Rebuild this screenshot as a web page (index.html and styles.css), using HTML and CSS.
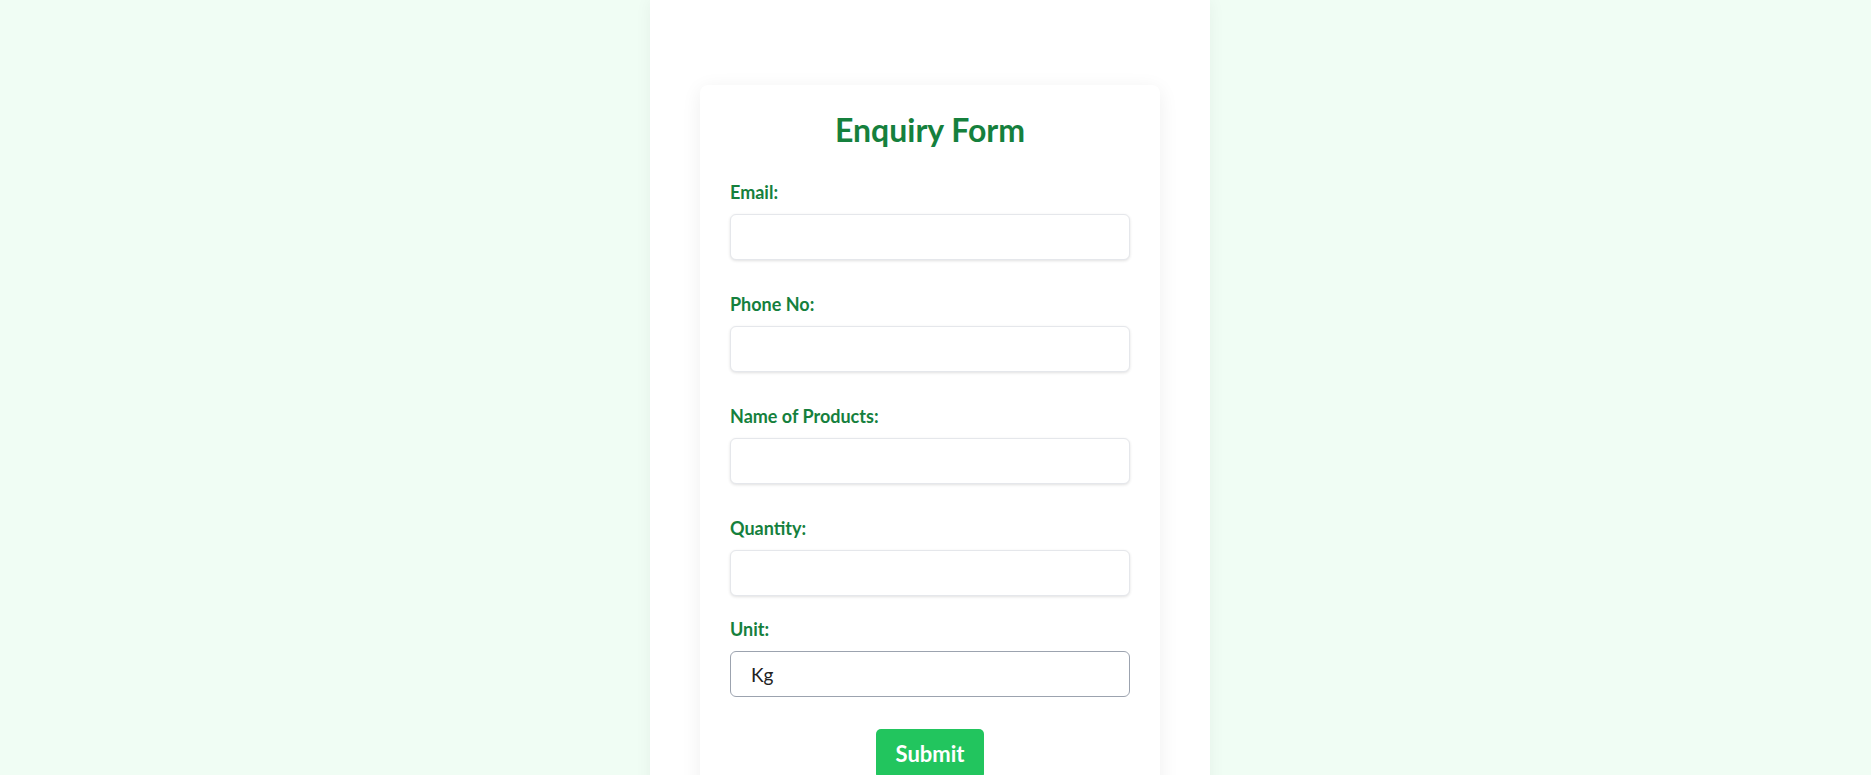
FILE: index.html
```html
<!DOCTYPE html>
<html lang="en">
<head>
<meta charset="utf-8">
<title>Enquiry Form</title>
<link rel="stylesheet" href="styles.css">
</head>
<body>
<div class="page">
  <div class="card">
    <h2 class="title">Enquiry Form</h2>
    <form class="form">
      <div class="field">
        <label class="label" for="email">Email:</label>
        <input class="input" type="email" id="email">
      </div>
      <div class="field">
        <label class="label" for="phone">Phone No:</label>
        <input class="input" type="tel" id="phone">
      </div>
      <div class="field">
        <label class="label" for="products">Name of Products:</label>
        <input class="input" type="text" id="products">
      </div>
      <div class="field field-tight">
        <label class="label" for="qty">Quantity:</label>
        <input class="input" type="number" id="qty">
      </div>
      <div class="field">
        <label class="label" for="unit">Unit:</label>
        <select class="select" id="unit">
          <option>Kg</option>
          <option>Ton</option>
          <option>Piece</option>
        </select>
      </div>
      <div class="actions">
        <button class="submit" type="button">Submit</button>
      </div>
    </form>
  </div>
</div>
</body>
</html>
```

FILE: styles.css
```css
* {
  box-sizing: border-box;
}

html, body {
  margin: 0;
  padding: 0;
}

body {
  background: #f0fdf4;
  font-family: Lato, "Open Sans", "Liberation Sans", sans-serif;
  padding-right: 11px;
}

.page {
  width: 560px;
  margin: 0 auto;
  background: #ffffff;
  min-height: 900px;
  padding: 85px 50px 40px;
  box-shadow: 0 0 16px rgba(0, 0, 0, 0.05);
}

.card {
  background: #ffffff;
  padding: 26px 30px 30px;
  border-radius: 8px;
  box-shadow: 0 4px 20px rgba(0, 0, 0, 0.07);
}

.title {
  margin: 0 0 31px;
  font-size: 32px;
  line-height: 38px;
  font-weight: 700;
  color: #15803d;
  text-align: center;
}

.form {
  display: flex;
  flex-direction: column;
}

.field {
  display: flex;
  flex-direction: column;
  margin-bottom: 32px;
}

.field-tight {
  margin-bottom: 21px;
}

.label {
  font-size: 18px;
  line-height: 24px;
  font-weight: 700;
  color: #15803d;
  margin-bottom: 10px;
}

.input {
  width: 100%;
  height: 46px;
  border: 1px solid #e5e7eb;
  border-radius: 6px;
  background: #ffffff;
  box-shadow: 0 1px 3px rgba(0, 0, 0, 0.12);
  padding: 0 14px;
  font-family: inherit;
  font-size: 18px;
  color: #222222;
  outline: none;
}

.select {
  width: 100%;
  height: 46px;
  border: 1px solid #9ca3af;
  border-radius: 6px;
  background: #ffffff;
  padding: 0 20px;
  font-family: inherit;
  font-size: 19px;
  color: #222222;
  -webkit-appearance: none;
  appearance: none;
  outline: none;
}

.actions {
  display: flex;
  justify-content: center;
}

.submit {
  background: #22c55e;
  color: #ffffff;
  border: none;
  border-radius: 5px;
  padding: 10px 20px;
  font-family: inherit;
  font-size: 22px;
  line-height: 30px;
  font-weight: 700;
  cursor: pointer;
}
```
